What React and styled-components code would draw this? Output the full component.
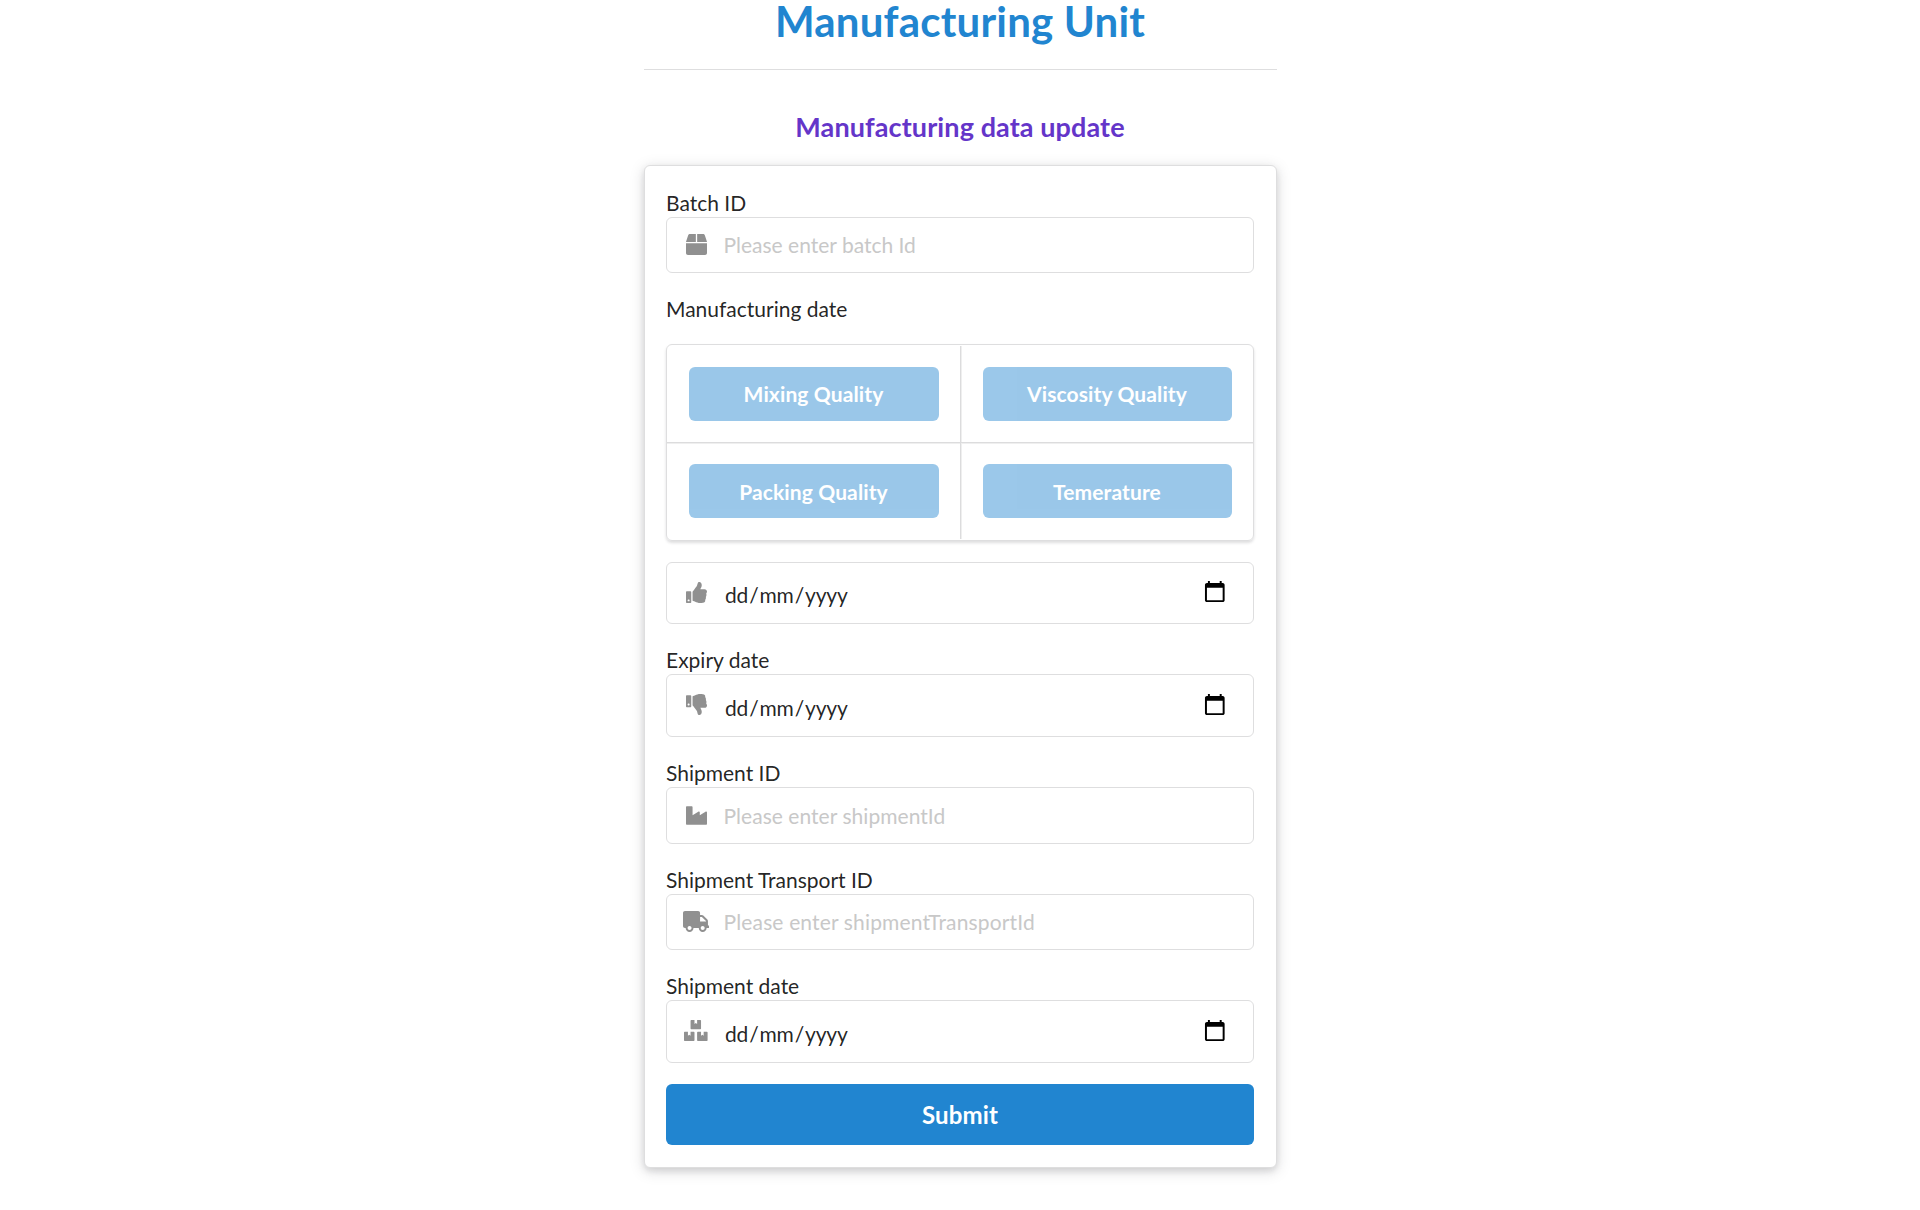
import React from "react";
import styled, { createGlobalStyle } from "styled-components";
import { FaBox, FaThumbsUp, FaThumbsDown, FaIndustry, FaTruck, FaBoxes } from "react-icons/fa";

const GlobalStyle = createGlobalStyle`
  *, *::before, *::after { box-sizing: border-box; }
  html, body { margin: 0; padding: 0; background: #fff; }
  body {
    font-family: Lato, "Liberation Sans", sans-serif;
    font-size: 21px;
    line-height: 30px;
    color: rgba(0, 0, 0, 0.87);
    overflow: hidden;
  }
`;

const Page = styled.main`
  display: flex;
  justify-content: center;
  height: 1210px;
`;

const Column = styled.div`
  width: 633px;
  display: flex;
  flex-direction: column;
`;

const Title = styled.h1`
  margin: 0;
  height: 49px;
  font-size: 42px;
  line-height: 42px;
  font-weight: 700;
  letter-spacing: 0.2px;
  text-align: center;
  color: #2185d0;
`;

const Divider = styled.hr`
  width: 100%;
  margin: 20px 0 0;
  border: 0;
  height: 1px;
  background: #dededf;
`;

const Subtitle = styled.h3`
  margin: 39px 0 0;
  height: 56px;
  font-size: 27px;
  line-height: 35px;
  font-weight: 700;
  letter-spacing: 0.1px;
  text-align: center;
  color: #6435c9;
`;

const Card = styled.form`
  padding: 21px 22px 22px 21px;
  border: 1px solid #dededf;
  border-radius: 6px;
  background: #fff;
  box-shadow: 0 3px 6px 0 rgba(34, 36, 38, 0.12), 0 3px 15px 0 rgba(34, 36, 38, 0.15);
`;

const Field = styled.div`
  margin-bottom: ${(p) => p.$gap || 21}px;
`;

const Label = styled.div`
  height: 30px;
  padding: ${(p) => (p.$raised ? 0 : 1)}px 0 0 0.5px;
`;

const InputBox = styled.div`
  display: flex;
  align-items: center;
  height: ${(p) => p.$height}px;
  padding: 0 26px 0 0;
  border: 1px solid #dededf;
  border-radius: 6px;
`;

const IconSlot = styled.span`
  display: flex;
  justify-content: center;
  flex: none;
  width: 57px;
  height: 21px;
  padding-left: 2px;
  color: #909090;
  margin-top: ${(p) => p.$shift || 0}px;

  svg {
    flex: none;
    height: 21px;
    width: ${(p) => p.$width || 21}px;
    display: block;
  }
`;

const TextInput = styled.input`
  flex: 1;
  min-width: 0;
  height: 26px;
  padding: 0;
  border: 0;
  outline: 0;
  background: transparent;
  font: inherit;
  letter-spacing: ${(p) => p.$tracking || 0}px;
  color: inherit;

  &::placeholder { color: #c8c8c8; opacity: 1; }
`;

const DateText = styled.span`
  flex: 1;
  display: flex;
  padding: ${(p) => (p.$low ? 4 : 3)}px 0 0 0.5px;
  letter-spacing: -0.17px;

  span { padding: 0 1px; }
`;

const CalendarIcon = styled.svg`
  width: 23.6px;
  height: 23px;
  margin-top: -3px;
`;

const QualityGrid = styled.div`
  display: grid;
  grid-template-columns: 294px 1fr;
  grid-template-rows: 97px 98px;
  height: 197px;
  margin: 20px 0 21px;
  border: 1px solid #dededf;
  border-radius: 6px;
  box-shadow: 0 2px 3px 0 rgba(34, 36, 38, 0.15);
`;

const Cell = styled.div`
  padding: 21px ${(p) => (p.$right ? 21 : 22)}px 0 22px;
  margin: ${(p) => (p.$last ? "1px 0 1px" : "1px 0 0")};
  box-shadow:
    ${(p) => (p.$right ? "-1px 0 0 0 #dcdcdd, inset 1px 0 0 0 #efefef" : "0 0 0 0 transparent")}
    ${(p) => (p.$last ? ", 0 -1px 0 0 #dcdcdd, inset 0 1px 0 0 #efefef" : "")};
`;

const Button = styled.button`
  display: block;
  width: 100%;
  height: ${(p) => (p.$large ? 61 : 54)}px;
  padding: 0 0 ${(p) => (p.$raised ? 2 : 0)}px ${(p) => (p.$large ? 1 : 0)}px;
  border: 0;
  border-radius: 6px;
  background: #2185d0;
  color: #fff;
  font-family: inherit;
  font-size: ${(p) => (p.$large ? 24 : 21)}px;
  line-height: 1;
  font-weight: 700;
  letter-spacing: 0.12px;
  opacity: ${(p) => (p.$faded ? 0.45 : 1)};
`;

function TextField({ label, icon, iconWidth, placeholder, tracking, height = 56, gap }) {
  return (
    <Field $gap={gap}>
      <Label>{label}</Label>
      <InputBox $height={height}>
        <IconSlot $shift={-1} $width={iconWidth}>{icon}</IconSlot>
        <TextInput placeholder={placeholder} $tracking={tracking} />
      </InputBox>
    </Field>
  );
}

function DateBox({ icon, iconWidth, height = 62 }) {
  return (
    <InputBox $height={height}>
      <IconSlot $shift={-2} $width={iconWidth}>{icon}</IconSlot>
      <DateText $low={height > 62}>
        <span>dd</span>/<span>mm</span>/<span>yyyy</span>
      </DateText>
      <CalendarIcon viewBox="0 0 24 24" preserveAspectRatio="none">
        <path d="M20 3h-1V1h-2v2H7V1H5v2H4c-1.1 0-2 .9-2 2v16c0 1.1.9 2 2 2h16c1.1 0 2-.9 2-2V5c0-1.1-.9-2-2-2zm0 18H4V8h16v13z" />
      </CalendarIcon>
    </InputBox>
  );
}

export default function App() {
  return (
    <Page>
      <GlobalStyle />
      <Column>
        <Title>Manufacturing Unit</Title>
        <Divider />
        <Subtitle>Manufacturing data update</Subtitle>
        <Card>
          <TextField label="Batch ID" icon={<FaBox />} placeholder="Please enter batch Id" />
          <Field $gap={20}>
            <Label $raised>Manufacturing date</Label>
            <QualityGrid>
              <Cell>
                <Button type="button" $faded $raised>Mixing Quality</Button>
              </Cell>
              <Cell $right>
                <Button type="button" $faded $raised>Viscosity Quality</Button>
              </Cell>
              <Cell $last>
                <Button type="button" $faded>Packing Quality</Button>
              </Cell>
              <Cell $right $last>
                <Button type="button" $faded>Temerature</Button>
              </Cell>
            </QualityGrid>
            <DateBox icon={<FaThumbsUp />} />
          </Field>
          <Field $gap={20}>
            <Label>Expiry date</Label>
            <DateBox icon={<FaThumbsDown />} height={63} />
          </Field>
          <TextField
            label="Shipment ID"
            icon={<FaIndustry />}
            placeholder="Please enter shipmentId"
            tracking={0.04}
            height={57}
            gap={20}
          />
          <TextField
            label="Shipment Transport ID"
            icon={<FaTruck />}
            iconWidth={26.25}
            placeholder="Please enter shipmentTransportId"
            tracking={0.15}
            gap={20}
          />
          <Field>
            <Label>Shipment date</Label>
            <DateBox icon={<FaBoxes />} iconWidth={23.6} height={63} />
          </Field>
          <Button type="button" $large>Submit</Button>
        </Card>
      </Column>
    </Page>
  );
}
